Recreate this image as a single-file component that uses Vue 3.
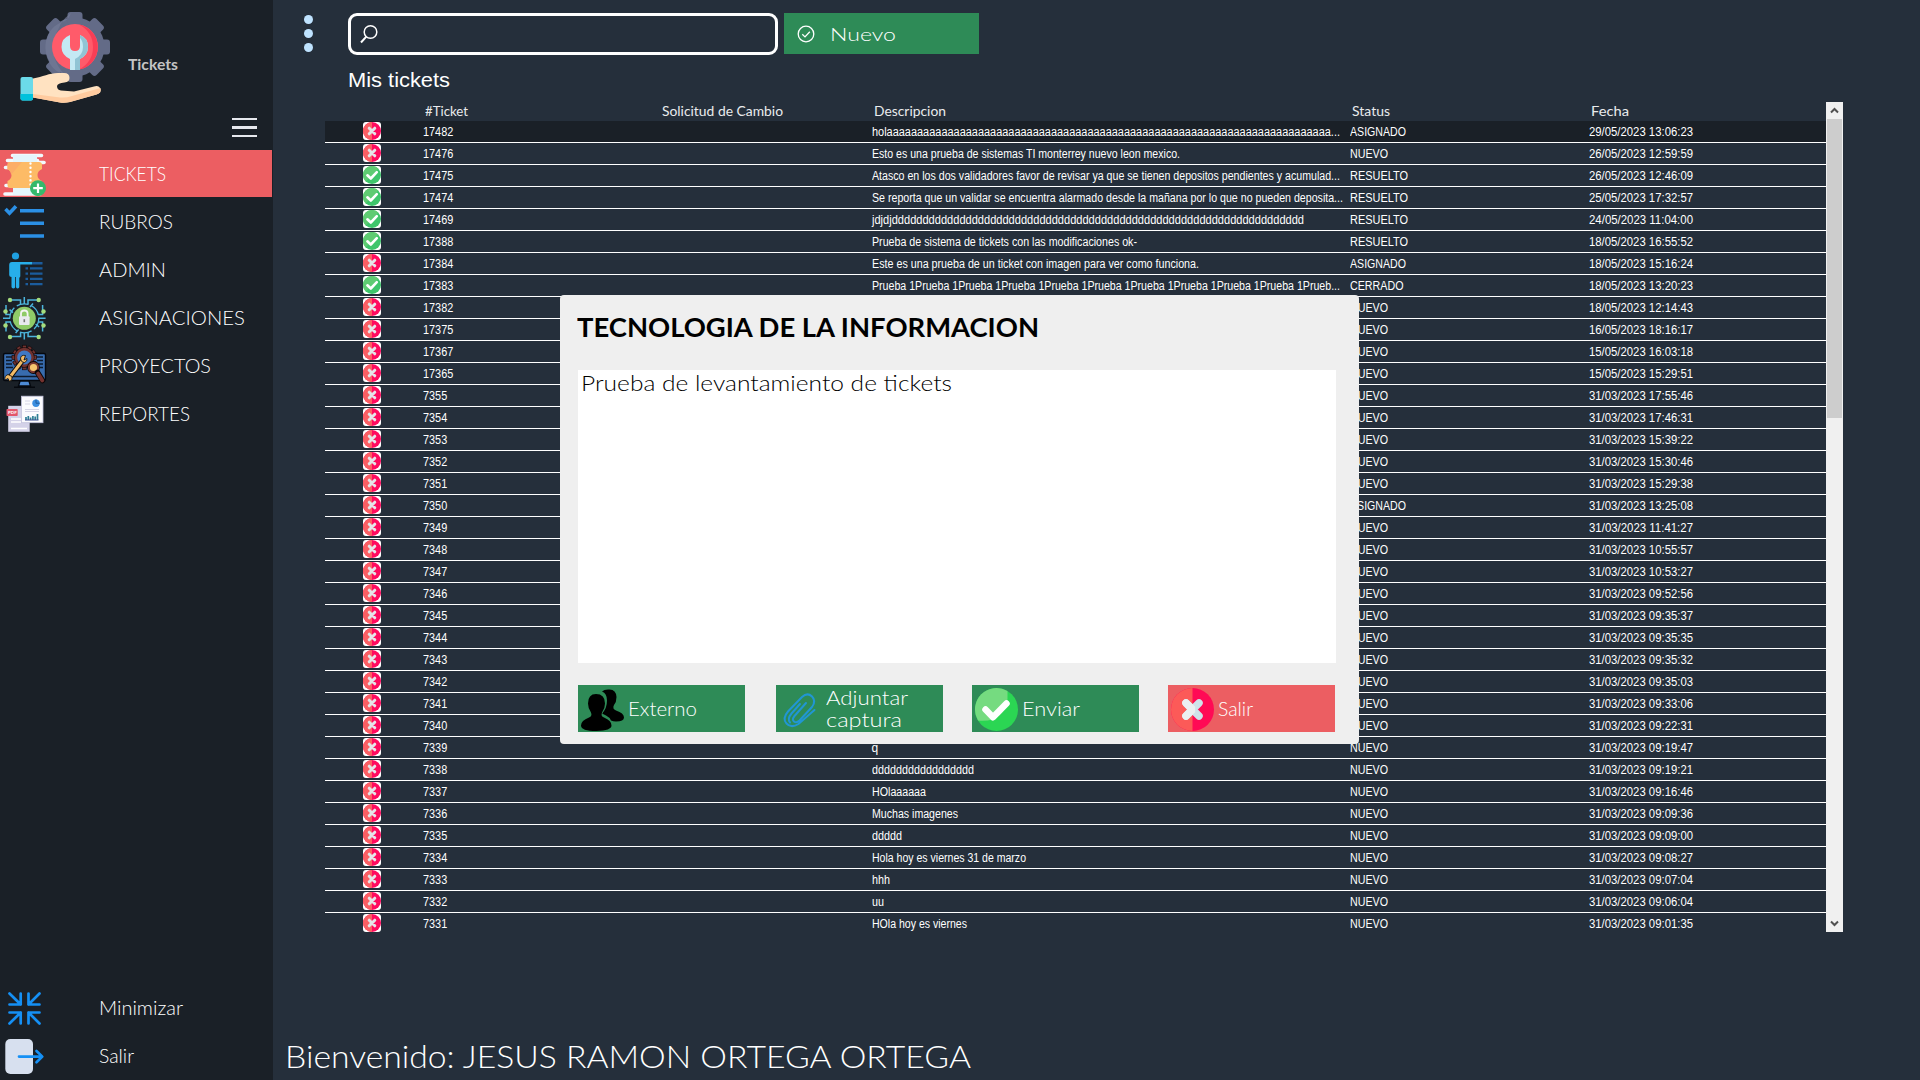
<script setup>
// Stretches or narrows a label horizontally to the given width in pixels.
const vFit = (el, { value }) => {
  if (!value) return
  el.style.transform = 'none'
  el.style.transform = `scaleX(${(value / el.getBoundingClientRect().width).toFixed(4)})`
}

const menu = [
  { label: 'TICKETS', icon: 'ticket', width: 67, active: true },
  { label: 'RUBROS', icon: 'list', width: 74 },
  { label: 'ADMIN', icon: 'admin', width: 67 },
  { label: 'ASIGNACIONES', icon: 'lock', width: 146 },
  { label: 'PROYECTOS', icon: 'project', width: 112 },
  { label: 'REPORTES', icon: 'report', width: 91 },
]
const gearTeeth = [0, 45, 90, 135, 180, 225, 270, 315]
const smallTeeth = [0, 30, 60, 90, 120, 150, 180, 210, 240, 270, 300, 330]
const quarters = [0, 90, 180, 270]

const raw = [
  ['17482', 'holaaaaaaaaaaaaaaaaaaaaaaaaaaaaaaaaaaaaaaaaaaaaaaaaaaaaaaaaaaaaaaaaaaaaaaaaa...', 'ASIGNADO', '29/05/2023 13:06:23', 468],
  ['17476', 'Esto es una prueba de sistemas TI monterrey nuevo leon mexico.', 'NUEVO', '26/05/2023 12:59:59', 308],
  ['17475', 'Atasco en los dos validadores favor de revisar ya que se tienen depositos pendientes y acumulad...', 'RESUELTO', '26/05/2023 12:46:09', 468],
  ['17474', 'Se reporta que un validar se encuentra alarmado desde la mañana por lo que no pueden deposita...', 'RESUELTO', '25/05/2023 17:32:57', 471],
  ['17469', 'jdjdjddddddddddddddddddddddddddddddddddddddddddddddddddddddddddddddddddd', 'RESUELTO', '24/05/2023 11:04:00', 432],
  ['17388', 'Prueba de sistema de tickets con las modificaciones ok-', 'RESUELTO', '18/05/2023 16:55:52', 265],
  ['17384', 'Este es una prueba de un ticket con imagen para ver como funciona.', 'ASIGNADO', '18/05/2023 15:16:24', 327],
  ['17383', 'Prueba 1Prueba 1Prueba 1Prueba 1Prueba 1Prueba 1Prueba 1Prueba 1Prueba 1Prueba 1Prueb...', 'CERRADO', '18/05/2023 13:20:23', 468],
  ['17382', '', 'NUEVO', '18/05/2023 12:14:43'],
  ['17375', '', 'NUEVO', '16/05/2023 18:16:17'],
  ['17367', '', 'NUEVO', '15/05/2023 16:03:18'],
  ['17365', '', 'NUEVO', '15/05/2023 15:29:51'],
  ['7355', '', 'NUEVO', '31/03/2023 17:55:46'],
  ['7354', '', 'NUEVO', '31/03/2023 17:46:31'],
  ['7353', '', 'NUEVO', '31/03/2023 15:39:22'],
  ['7352', '', 'NUEVO', '31/03/2023 15:30:46'],
  ['7351', '', 'NUEVO', '31/03/2023 15:29:38'],
  ['7350', '', 'ASIGNADO', '31/03/2023 13:25:08'],
  ['7349', '', 'NUEVO', '31/03/2023 11:41:27'],
  ['7348', '', 'NUEVO', '31/03/2023 10:55:57'],
  ['7347', '', 'NUEVO', '31/03/2023 10:53:27'],
  ['7346', '', 'NUEVO', '31/03/2023 09:52:56'],
  ['7345', '', 'NUEVO', '31/03/2023 09:35:37'],
  ['7344', '', 'NUEVO', '31/03/2023 09:35:35'],
  ['7343', '', 'NUEVO', '31/03/2023 09:35:32'],
  ['7342', '', 'NUEVO', '31/03/2023 09:35:03'],
  ['7341', '', 'NUEVO', '31/03/2023 09:33:06'],
  ['7340', '', 'NUEVO', '31/03/2023 09:22:31'],
  ['7339', 'q', 'NUEVO', '31/03/2023 09:19:47'],
  ['7338', 'ddddddddddddddddd', 'NUEVO', '31/03/2023 09:19:21', 102],
  ['7337', 'HOlaaaaaa', 'NUEVO', '31/03/2023 09:16:46', 54],
  ['7336', 'Muchas imagenes', 'NUEVO', '31/03/2023 09:09:36', 86],
  ['7335', 'ddddd', 'NUEVO', '31/03/2023 09:09:00', 30],
  ['7334', 'Hola hoy es viernes 31 de marzo', 'NUEVO', '31/03/2023 09:08:27', 154],
  ['7333', 'hhh', 'NUEVO', '31/03/2023 09:07:04', 18],
  ['7332', 'uu', 'NUEVO', '31/03/2023 09:06:04', 12],
  ['7331', 'HOla hoy es viernes', 'NUEVO', '31/03/2023 09:01:35', 95],
]
const statusWidth = { NUEVO: 38, ASIGNADO: 56, RESUELTO: 58, CERRADO: 53.5 }
const rows = raw.map(([id, text, status, date, width]) => ({
  id, text, status, date, width,
  done: status === 'RESUELTO' || status === 'CERRADO',
}))
</script>

<template>
  <div class="app">
    <aside class="sidebar">
      <header class="brand">
        <svg class="logo" width="120" height="108" viewBox="0 0 120 108">
          <g fill="#636b87">
            <circle cx="75" cy="47" r="29.5" />
            <rect v-for="a in gearTeeth" :key="a" x="67.5" y="12" width="15" height="14" rx="3" :transform="`rotate(${a} 75 47)`" />
          </g>
          <path d="M71 13q-3 8-9 9C47 28 42 44 48 60q4 9 12 13l6 3q-16-16-12-35 5-20 17-28z" fill="#737b97" opacity=".7" />
          <circle cx="75" cy="47" r="23" fill="#ff5b6a" />
          <path d="M79 24.400A23 23 0 0 1 79 69.600Q93 62 93 47T79 24.400z" fill="#f93e55" />
          <path d="M70 35v11q0 5 5 5t5-5V35q8 3 8 12 0 8-8 12v11H70V59q-8.500-4-8.500-12 0-9 8.500-12z" fill="#c4e9f3" />
          <path d="M80 35q8 3 8 12 0 8-8 12v11h-5V59q8-4 8-12 0-6-3-9z" fill="#91c4d4" />
          <path d="M33 78.500C43 77 49 73 58 73h6q5.500 0 5.500 5 0 4-5 4.500-7 .5-7.500 3.500 0 4 4 4.500l13 1L94 86.500q5-1.500 6.500 2.500 1 4-4 5.500L70 102q-5 1.200-10 .5L33 97.500z" fill="#ffe2c1" />
          <path d="M33 94l27 3.500q6 .5 12-1.500l28.500-8q1.500 5-4 6.500L70 102q-5 1.200-10 .5L33 97.500z" fill="#ffcb9f" />
          <rect x="20.500" y="77" width="12.500" height="23.500" rx="2" fill="#6bdae9" />
          <path d="M20.500 94H33v4.500q0 2-2 2h-8.500q-2 0-2-2z" fill="#00c2dc" />
        </svg>
        <span v-fit="50" class="brand-name">Tickets</span>
      </header>
      <div class="toggle"><i></i><i></i><i></i></div>

      <nav>
        <a v-for="item in menu" :key="item.label" class="item" :class="{ active: item.active }">
          <svg width="48" height="48" viewBox="0 0 48 48">
            <g v-if="item.icon === 'ticket'">
              <path d="M12.500 5.500h29M7.500 10.500h30M5.500 17.500h30M6 35.500h30M5 44h35" stroke="#f1fafe" stroke-width="3.600" stroke-linecap="round" />
              <rect x="13" y="5" width="24" height="40" fill="#e4f6fc" />
              <path d="M39 12.500h5" stroke="#f1fafe" stroke-width="3.600" stroke-linecap="round" />
              <path d="M10 12h29q3 0 3 3v4q-4.500 2-4.500 6t4.500 6v3q0 4-3 4H10q-2.500 0-2.500-3v-4q4-2 4-6t-4-6v-4q0-3 2.500-3z" fill="#fdbb66" />
              <path d="M10 12h12l-11 13q0-4-3.500-6v-4q0-3 2.500-3z" fill="#fcae68" />
              <path d="M30.500 13.500v24" stroke="#fff" stroke-width="2.400" stroke-linecap="round" stroke-dasharray="0.100 4.100" />
              <circle cx="38" cy="38.200" r="8" fill="#35b96c" />
              <path d="M38 33.400v9.600M33.200 38.200h9.600" stroke="#fff" stroke-width="2.200" />
            </g>
            <g v-else-if="item.icon === 'list'" fill="none" stroke="#2b90e6" stroke-width="3.600">
              <path d="M5.500 11l4 4.200 6.500-7M20 12.700h24M20 25.300h24M20 38h24" />
            </g>
            <g v-else-if="item.icon === 'admin'">
              <circle cx="15.500" cy="10" r="3.600" fill="#1f9fe0" />
              <path d="M12 16h20v2.600H20.300V30q0 1.500-1 1.500V41q0 1.400-1.700 1.400T16 41V31h-.8v10q0 1.400-1.800 1.400T11.500 41V31q-2.300 0-2.300-2V19q0-3 2.800-3z" fill="#27aeea" />
              <path d="M32 16h10.500v2.600H32zM30 21.300h12.500v2.300H30zM30 26.500h12.500v2.300H30zM30 31.700h12.500V34H30zM30 37h12.500v2.300H30zM25.500 21.300h2.500v2.300h-2.500zM25.500 26.500h2.500v2.300h-2.500zM25.500 31.700h2.500V34h-2.500zM25.500 37h2.500v2.300h-2.500z" fill="#1b5c9d" />
            </g>
            <g v-else-if="item.icon === 'lock'">
              <g v-for="a in quarters" :key="a" :transform="`rotate(${a} 24.300 24.300)`">
                <path d="M24.300 3v7M20.500 10.500V6H11M28 10.500V6h9.500M30 13l3-3.500" fill="none" stroke="#4cb4dc" stroke-width="1.500" />
              </g>
              <circle cx="24.300" cy="24.300" r="14.500" fill="none" stroke="#4cb4dc" stroke-width="1.300" stroke-dasharray="12 3" />
              <g fill="#a5dc7d">
                <circle cx="10" cy="6" r="2.200" /><circle cx="38.700" cy="6" r="2.200" />
                <circle cx="5.500" cy="17.500" r="2.200" /><circle cx="43.500" cy="17.500" r="2.200" />
                <circle cx="5.500" cy="31.500" r="2.200" /><circle cx="43.500" cy="31.500" r="2.200" />
                <circle cx="10" cy="43" r="2.200" /><circle cx="38.700" cy="43" r="2.200" />
              </g>
              <circle cx="24.300" cy="24.300" r="11.500" fill="#8fcb68" />
              <path d="M21 23v-3.500q0-3 3.300-3t3.300 3V23" fill="none" stroke="#f4f4f4" stroke-width="1.800" />
              <rect x="19" y="22.300" width="10.600" height="8.700" rx="1" fill="#e9eaf0" />
              <path d="M24.300 25.200v3" stroke="#777" stroke-width="1.600" />
            </g>
            <g v-else-if="item.icon === 'project'">
              <rect x="3.500" y="11.500" width="42" height="27" rx="1.500" fill="#386cae" stroke="#05080e" stroke-width="1.400" />
              <path d="M20 39h9l1.500 5h-12zM14 45.200h21" fill="#4d8ad4" stroke="#05080e" stroke-width="1.400" />
              <path d="M6 15h7M6 18.500h6M6 22h6M6 25.500h7M36 15h7M37 18.500h6M37 22h6M36 25.500h7M6 34.500h36" stroke="#0c1a2d" stroke-width="1.300" />
              <g fill="#6f3230" stroke="#0b0607" stroke-width=".6">
                <rect v-for="a in smallTeeth" :key="a" x="22.300" y="3.200" width="4" height="5" :transform="`rotate(${a} 24.300 15.500)`" />
              </g>
              <circle cx="24.300" cy="15.500" r="10.200" fill="#0b0607" />
              <circle cx="24.300" cy="15.500" r="8.400" fill="#3f78c4" stroke="#6f3230" stroke-width="2.600" />
              <path d="M10 35L23 18" stroke="#05080e" stroke-width="5" />
              <path d="M10 35L23 18" stroke="#f2bb66" stroke-width="3" />
              <path d="M25.500 13.500q-5-1-5 3.500 1 4 4 3.500 3-1 2.500-4l-3 1.500zM8 32.500q-4 1.500-3 5.500l3-1.500 1.500 3q3.500-1.500 2.500-5z" fill="#f2bb66" stroke="#05080e" stroke-width=".8" />
              <circle cx="33.500" cy="25.500" r="6.400" fill="#0b0607" />
              <circle cx="33.500" cy="25.500" r="4.600" fill="#f6c56e" stroke="#7c3a32" stroke-width="2" />
              <path d="M37.500 30.500l5 8" stroke="#0b0607" stroke-width="5.500" stroke-linecap="round" />
              <path d="M38 31.500l4.300 7" stroke="#74322f" stroke-width="3.800" stroke-linecap="round" />
            </g>
            <g v-else>
              <rect x="8.200" y="15.800" width="21.500" height="26" fill="#d4d2e8" />
              <path d="M11 29h10M11 32h10M11 38.500h16" stroke="#fff" stroke-width="1.500" />
              <rect x="21.500" y="6.200" width="21.500" height="26.500" fill="#fbfbfe" stroke="#c4c3dc" stroke-width=".8" />
              <path d="M25 11h5M25 14h5M25 19.500h14M25 21.500h14" stroke="#d6d5e6" stroke-width="1" />
              <circle cx="36" cy="13.200" r="3.700" fill="#3b8ee0" />
              <path d="M36 9.500v3.700h3.700" fill="none" stroke="#225a9c" stroke-width="1" />
              <path d="M26 30v-3M28.300 30v-4M30.600 30v-2.500M32.900 30v-4M35.200 30v-3.500M37.500 30v-6" stroke="#2e7f95" stroke-width="1.700" />
              <path d="M25 30h13.500" stroke="#3a4f90" stroke-width="1" />
              <rect x="6.500" y="19" width="11.200" height="7" rx=".8" fill="#e2566b" />
              <text x="8" y="24.300" class="pdf">PDF</text>
            </g>
          </svg>
          <span v-fit="item.width">{{ item.label }}</span>
        </a>
      </nav>

      <nav class="bottom">
        <a class="item">
          <svg width="48" height="48" viewBox="0 0 48 48" fill="none" stroke="#1590f5" stroke-width="2.700" stroke-linecap="round" stroke-linejoin="round">
            <path d="M9.500 9.500L20.700 20.500M20.700 9.500v11H9.500M39.500 9.500L28.500 20.500M28.500 9.500v11h11M9.500 39.500L20.700 28.500M20.700 39.500v-11H9.500M39.500 39.500L28.500 28.500M28.500 39.500v-11h11" />
          </svg>
          <span v-fit="84">Minimizar</span>
        </a>
        <a class="item">
          <svg width="48" height="48" viewBox="0 0 48 48">
            <rect x="5.300" y="7" width="27.700" height="35" rx="5" fill="#d7e0ef" />
            <path d="M19 24.600h23M36.500 19l5.800 5.600-5.800 5.600" fill="none" stroke="#1590f5" stroke-width="2.700" stroke-linecap="round" stroke-linejoin="round" />
          </svg>
          <span v-fit="35">Salir</span>
        </a>
      </nav>
    </aside>

    <main class="main">
      <div class="toolbar">
        <div class="dots"><i></i><i></i><i></i></div>
        <div class="search">
          <svg width="20" height="22" viewBox="0 0 20 22" fill="none" stroke="#fff">
            <circle cx="11.500" cy="8" r="6.300" stroke-width="1.500" />
            <path d="M7.300 12.700L2 18.500" stroke-width="2" />
          </svg>
        </div>
        <button class="new">
          <svg width="18" height="18" viewBox="0 0 18 18" fill="none" stroke="#fff" stroke-width="1.300">
            <circle cx="9" cy="9" r="7.800" />
            <path d="M5.300 9.300l2.700 2.600 4.800-5.200" />
          </svg>
          <span v-fit="66">Nuevo</span>
        </button>
      </div>

      <h2 class="heading"><span v-fit="102">Mis tickets</span></h2>

      <div class="table-wrap">
        <div class="table">
          <div class="row head">
            <span></span>
            <span><b v-fit="43">#Ticket</b></span>
            <span><b v-fit="121">Solicitud de Cambio</b></span>
            <span><b v-fit="72">Descripcion</b></span>
            <span><b v-fit="38">Status</b></span>
            <span><b v-fit="38">Fecha</b></span>
          </div>
          <div v-for="(r, i) in rows" :key="r.id" class="row" :class="{ selected: i === 0 }">
            <span class="mark">
              <svg v-if="r.done" width="18" height="18" viewBox="0 0 18 18">
                <rect width="18" height="18" rx="3" fill="#fff" />
                <circle cx="9" cy="9" r="9" fill="#3ec56b" />
                <path d="M15.400 2.600A9 9 0 0 0 2.600 15.400z" fill="#5fcb72" />
                <path d="M4.400 9.300l3.400 3.200 6-6.300" fill="none" stroke="#fff" stroke-width="2.600" stroke-linecap="round" stroke-linejoin="round" />
              </svg>
              <svg v-else width="18" height="18" viewBox="0 0 18 18">
                <rect width="18" height="18" rx="3" fill="#fff" />
                <circle cx="9" cy="9" r="9" fill="#ff0b5f" />
                <path d="M9 0a9 9 0 0 0 0 18z" fill="#fb5f63" />
                <path d="M6.200 6.200l5.600 5.600M11.800 6.200l-5.600 5.600" stroke="#e6e4e8" stroke-width="3" stroke-linecap="round" />
              </svg>
            </span>
            <span class="cell"><b v-fit="r.id.length * 6.05">{{ r.id }}</b></span>
            <span></span>
            <span class="cell"><b v-fit="r.width">{{ r.text }}</b></span>
            <span class="cell"><b v-fit="statusWidth[r.status]">{{ r.status }}</b></span>
            <span class="cell"><b v-fit="104">{{ r.date }}</b></span>
          </div>
        </div>
        <div class="scrollbar">
          <svg width="17" height="17" viewBox="0 0 17 17" fill="none" stroke="#505050" stroke-width="2"><path d="M5 10.500L8.500 7l3.500 3.500" /></svg>
          <div class="thumb"></div>
          <svg class="down" width="17" height="17" viewBox="0 0 17 17" fill="none" stroke="#505050" stroke-width="2"><path d="M5 6.500L8.500 10 12 6.500" /></svg>
        </div>
      </div>

      <footer class="welcome"><span v-fit="686">Bienvenido: JESUS RAMON ORTEGA ORTEGA</span></footer>
    </main>

    <section class="modal">
      <h1><span v-fit="462">TECNOLOGIA DE LA INFORMACION</span></h1>
      <div class="field"><span v-fit="371">Prueba de levantamiento de tickets</span></div>
      <div class="actions">
        <button>
          <svg width="50" height="47" viewBox="0 0 50 47">
            <path d="M30 4.500q8-1 8.500 7.500 0 5-2.500 8-2 4 2 5.500 8 2.500 8 7 0 4-8 4-3 0-5-1-1-3-5-5l-4-2q5-5 5-13 0-7-5-9 2-2 6-2z" />
            <path d="M18 9q9 0 9 9.500 0 5-3 9-1.500 4 2 5 7.500 3 7.500 8 0 5-15 5.500-15.500 0-15.500-5.500 0-5 8-8 3.500-1.500 2-5-3-4-3-9Q10 9 18 9z" stroke="#2e8b57" stroke-width="1.200" paint-order="stroke" />
          </svg>
          <span v-fit="69">Externo</span>
        </button>
        <button>
          <svg width="50" height="47" viewBox="0 0 50 47" fill="none" stroke="#2196d3" stroke-width="2" stroke-linecap="round">
            <path d="M30 18L18.500 31q-3 3.500-.5 5.500t5.500-1L36 22q4.500-6 0-10.500T26 12L12 26.500q-6 7-1.500 12t12 .5L38.500 25M24 19l-8.500 9.500q-4.500 5.500-1.500 9" />
          </svg>
          <span><em v-fit="82">Adjuntar</em><br><em v-fit="76">captura</em></span>
        </button>
        <button>
          <svg width="50" height="47" viewBox="0 0 50 47">
            <circle cx="24.500" cy="24.500" r="21.500" fill="#2bd653" />
            <path d="M35.500 6.020A21.500 21.500 0 0 0 6.020 35.500Q32 38 35.500 14z" fill="#75db80" />
            <path d="M13.500 24.500l7.500 7.700 13.500-13.700" fill="none" stroke="#fff" stroke-width="6.500" stroke-linecap="round" stroke-linejoin="round" />
          </svg>
          <span v-fit="58">Enviar</span>
        </button>
        <button class="exit">
          <svg width="50" height="47" viewBox="0 0 50 47">
            <circle cx="24.500" cy="24.500" r="21.500" fill="#ff0a55" />
            <path d="M24.500 3a21.500 21.500 0 0 0 0 43z" fill="#fc5a58" />
            <path d="M18 18l13 13M31 18L18 31" stroke="#cfe2ea" stroke-width="7.500" stroke-linecap="round" />
            <path d="M18 18l6.500 6.500L18 31" fill="none" stroke="#eceff1" stroke-width="7.500" stroke-linecap="round" stroke-linejoin="bevel" />
          </svg>
          <span v-fit="35">Salir</span>
        </button>
      </div>
    </section>
  </div>
</template>

<style>
body {
  margin: 0;
  background: #252f3b;
}
</style>

<style scoped>
.app {
  position: relative;
  display: flex;
  width: 1920px;
  height: 1080px;
  overflow: hidden;
  background: #252f3b;
  color: #fff;
  font-family: Lato, 'Open Sans', sans-serif;
  font-weight: 300;
}
span, b, em {
  display: inline-block;
  white-space: nowrap;
  font-style: normal;
  transform-origin: 0 50%;
}
svg {
  display: block;
  flex: none;
}
.sidebar {
  display: flex;
  flex-direction: column;
  width: 273px;
  flex: none;
  background: #1a2027;
}
.brand {
  display: flex;
  align-items: center;
  height: 108px;
}
.brand-name {
  margin: 18px 0 0 8px;
  font-size: 16px;
  font-weight: 700;
  color: #c4c4c4;
}
.toggle {
  display: flex;
  flex-direction: column;
  gap: 6px;
  width: 25px;
  height: 32px;
  padding: 10px 0 0;
  margin-left: 232px;
}
.toggle i {
  height: 2.300px;
  background: #e6e8ee;
}
.item {
  display: flex;
  align-items: center;
  gap: 51px;
  height: 48px;
  font-size: 19px;
}
.item span {
  padding-bottom: 2px;
}
.active {
  width: 272px;
  background: linear-gradient(#ec5e62 47px, #1a2027 47px);
}
.bottom {
  margin-top: auto;
}
.pdf {
  font: 700 4.500px Lato, sans-serif;
  fill: #fff;
}
.main {
  display: flex;
  flex-direction: column;
  flex: 1;
  min-width: 0;
}
.toolbar {
  display: flex;
  height: 42px;
  padding: 13px 0 0 31px;
}
.dots {
  display: flex;
  flex-direction: column;
  gap: 5px;
  width: 44px;
  padding-top: 2px;
}
.dots i {
  width: 9px;
  height: 9px;
  border-radius: 50%;
  background: #bfe3ff;
}
.search {
  box-sizing: border-box;
  width: 430px;
  height: 42px;
  margin-right: 6px;
  padding: 8px;
  border: 3px solid #fff;
  border-radius: 9px;
}
button {
  display: flex;
  align-items: center;
  border: 0;
  padding: 0;
  background: #2e8b57;
  color: #fff;
  font: 300 19px/22px Lato, sans-serif;
  text-align: left;
}
.new {
  width: 195px;
  height: 41px;
  padding-left: 13px;
  gap: 15px;
  font-size: 18.500px;
}
.heading {
  margin: 12px 0 0 75px;
  font: 400 20.500px/26px 'Liberation Sans', Arial, sans-serif;
}
.table-wrap {
  display: flex;
  height: 830px;
  margin: 9px 0 0 52px;
}
.table {
  width: 1501px;
  overflow: hidden;
}
.row {
  display: grid;
  grid-template-columns: 97px 237px 212px 478px 239px 1fr;
  box-sizing: border-box;
  height: 22px;
  border-bottom: 1px solid #fff;
  font: 400 12px/21px 'Liberation Sans', Arial, sans-serif;
}
.row b {
  font-weight: inherit;
}
.cell {
  height: 20px;
  padding: 1px 0 0 0.500px;
}
.head {
  height: 19px;
  border: 0;
  font: 400 12.500px/20px Lato, sans-serif;
  color: #e9ebed;
}
.head span {
  padding-left: 3px;
}
.selected {
  background: #1a2027;
}
.mark {
  padding: 1px 0 0 38px;
}
.scrollbar {
  display: flex;
  flex-direction: column;
  width: 17px;
  background: #f0f0f0;
}
.thumb {
  height: 299px;
  margin: 0 1px;
  background: #cdcdcd;
}
.down {
  margin-top: auto;
}
.welcome {
  margin: auto 0 4px 12px;
  font-size: 31px;
  line-height: 40px;
}
.modal {
  position: absolute;
  left: 560px;
  top: 295px;
  box-sizing: border-box;
  width: 799px;
  height: 449px;
  padding: 15px 18px 12px;
  border-radius: 4px;
  background: #efefef;
  color: #000;
}
h1 {
  margin: 0 0 0 -1px;
  font-size: 26.500px;
  line-height: 34px;
}
.field {
  box-sizing: border-box;
  width: 758px;
  height: 293px;
  margin-top: 26px;
  padding: 0 3px;
  background: #fff;
  font-size: 21px;
  line-height: 25px;
}
.actions {
  display: flex;
  gap: 29px;
  margin-top: 22px;
}
.actions button {
  width: 167px;
  height: 47px;
}
.actions button:first-child {
  margin-right: 2px;
}
.actions .exit {
  background: #ec5e62;
}
</style>
